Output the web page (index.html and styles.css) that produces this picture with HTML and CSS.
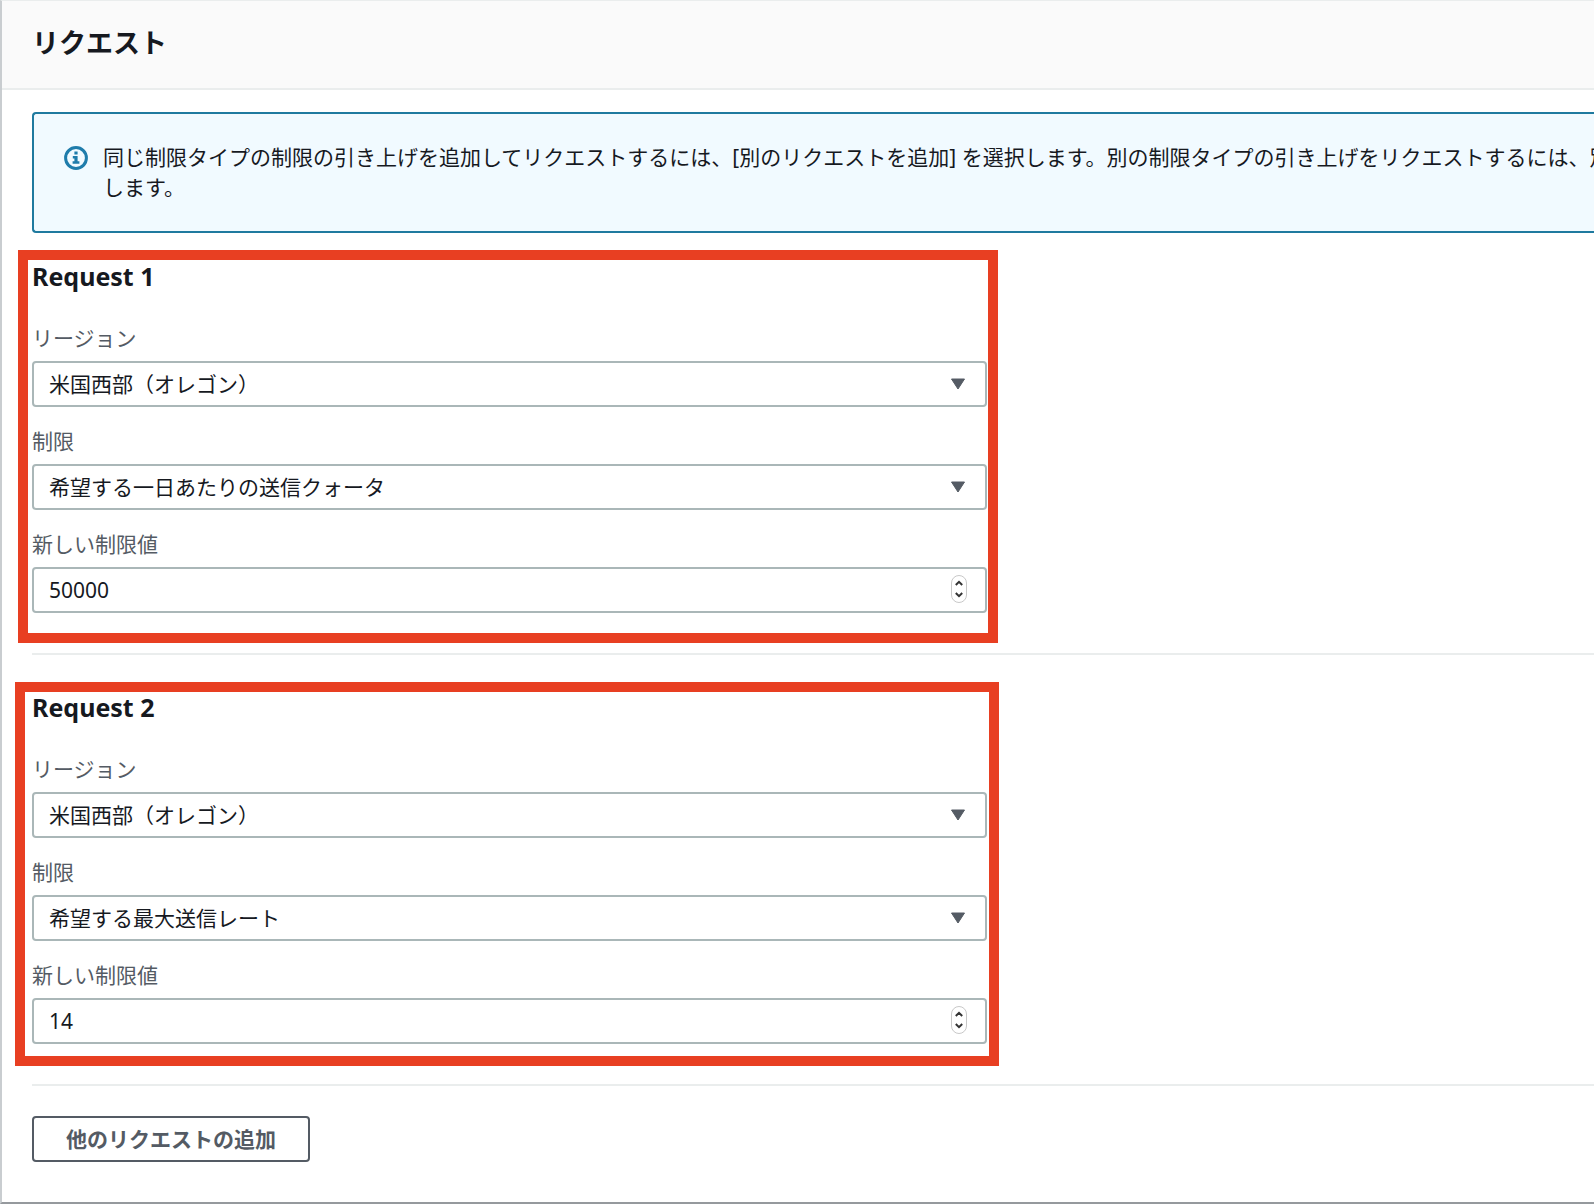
FILE: index.html
```
<!DOCTYPE html>
<html lang="ja">
  <head>
    <meta charset="UTF-8" />
    <title>リクエスト</title>
    <link rel="stylesheet" href="styles.css">
  </head>
  <body>
    <main class="panel">
      <header class="panel-header">
        <h1>リクエスト</h1>
      </header>
      <form class="panel-body">
        <div class="alert">
          <svg class="alert-icon" viewBox="0 0 24 24" aria-hidden="true">
            <circle cx="12" cy="12" r="10.4" />
            <path class="solid" d="M10.4 5.6h3.2v3h-3.2zM8.8 10h4.8v5.2h1.8v2.6H8.6v-2.6h1.8v-2.6H8.8z" />
          </svg>
          <p>
            同じ制限タイプの制限の引き上げを追加してリクエストするには、[別のリクエストを追加] を選択します。別の制限タイプの引き上げをリクエストするには、別<br />します。
          </p>
        </div>

        <section class="request">
          <div class="request-fields">
            <h2>Request 1</h2>
            <div class="field">
              <label for="region1">リージョン</label>
              <div class="control">
                <select id="region1" name="region1">
                  <option>米国西部（オレゴン）</option>
                </select>
                <svg class="arrow" viewBox="0 0 16 12" aria-hidden="true"><path d="M1.5 1h13L8 11z" /></svg>
              </div>
            </div>
            <div class="field">
              <label for="limit1">制限</label>
              <div class="control">
                <select id="limit1" name="limit1">
                  <option>希望する一日あたりの送信クォータ</option>
                </select>
                <svg class="arrow" viewBox="0 0 16 12" aria-hidden="true"><path d="M1.5 1h13L8 11z" /></svg>
              </div>
            </div>
            <div class="field">
              <label for="value1">新しい制限値</label>
              <div class="control">
                <input type="number" id="value1" name="value1" value="50000" />
                <svg class="stepper" viewBox="0 0 16 28" aria-hidden="true">
                  <rect x="0.5" y="0.5" width="15" height="27" rx="7.5" />
                  <path d="M4.8 10L8 6.8l3.2 3.2M4.8 18L8 21.2l3.2-3.2" />
                </svg>
              </div>
            </div>
            <div class="highlight highlight-first"></div>
          </div>
        </section>

        <section class="request">
          <div class="request-fields">
            <h2>Request 2</h2>
            <div class="field">
              <label for="region2">リージョン</label>
              <div class="control">
                <select id="region2" name="region2">
                  <option>米国西部（オレゴン）</option>
                </select>
                <svg class="arrow" viewBox="0 0 16 12" aria-hidden="true"><path d="M1.5 1h13L8 11z" /></svg>
              </div>
            </div>
            <div class="field">
              <label for="limit2">制限</label>
              <div class="control">
                <select id="limit2" name="limit2">
                  <option>希望する最大送信レート</option>
                </select>
                <svg class="arrow" viewBox="0 0 16 12" aria-hidden="true"><path d="M1.5 1h13L8 11z" /></svg>
              </div>
            </div>
            <div class="field">
              <label for="value2">新しい制限値</label>
              <div class="control">
                <input type="number" id="value2" name="value2" value="14" />
                <svg class="stepper" viewBox="0 0 16 28" aria-hidden="true">
                  <rect x="0.5" y="0.5" width="15" height="27" rx="7.5" />
                  <path d="M4.8 10L8 6.8l3.2 3.2M4.8 18L8 21.2l3.2-3.2" />
                </svg>
              </div>
            </div>
            <div class="highlight highlight-second"></div>
          </div>
        </section>

        <button type="button" class="add-button">他のリクエストの追加</button>
      </form>
    </main>
  </body>
</html>
```
FILE: styles.css
```
* {
  box-sizing: border-box;
}
body {
  margin: 0;
  background-color: #f2f3f3;
  color: #16191f;
  font-family: "Noto Sans", "Noto Sans CJK JP", sans-serif;
  font-size: 21px;
  line-height: 30px;
  overflow-x: hidden;
}
h1,
h2,
p {
  margin: 0;
}
.panel {
  background-color: #fff;
  border-left: 2px solid #c9cdd0;
  border-top: 1px solid #eaeded;
  border-bottom: 2px solid #95999d;
}
.panel-header {
  background-color: #fafafa;
  border-bottom: 2px solid #eaeded;
  padding: 24px 30px 27px;
}
h1 {
  font-size: 27px;
  line-height: 36px;
}
.panel-body {
  padding: 22px 0 40px 30px;
}

/* Message d'information */
.alert {
  display: flex;
  gap: 15px;
  padding: 28px 0 29px 30px;
  background-color: #f1faff;
  border: 2px solid #1f7a9f;
  border-right: none;
  border-radius: 4px 0 0 4px;
  overflow: hidden;
}
.alert p {
  white-space: nowrap;
}
.alert-icon {
  flex: none;
  width: 24px;
  height: 24px;
  margin-top: 4px;
  fill: none;
  stroke: #1f7cab;
  stroke-width: 3;
}
.alert-icon .solid {
  fill: #1f7cab;
  stroke: none;
}

.request {
  border-bottom: 2px solid #eaeded;
  padding: 36px 0 40px;
}
.alert + .request {
  padding-top: 27px;
}
.request-fields {
  position: relative;
  max-width: 955px;
}
h2 {
  font-size: 25px;
  line-height: 32px;
  margin-bottom: 31px;
}
.field + .field {
  margin-top: 19px;
}
label {
  display: block;
  color: #545b64;
  margin-bottom: 8px;
}
.control {
  position: relative;
}
select,
input {
  display: block;
  appearance: none;
  width: 100%;
  height: 46px;
  padding: 0 48px 0 15px;
  border: 2px solid #aab7b8;
  border-radius: 4px;
  background-color: #fff;
  color: #16191f;
  font: inherit;
}
input {
  appearance: textfield;
}
input::-webkit-inner-spin-button {
  display: none;
}
.arrow,
.stepper {
  position: absolute;
  pointer-events: none;
}
.arrow {
  top: 17px;
  right: 21px;
  width: 16px;
  height: 12px;
  fill: #545b64;
  stroke: #545b64;
  stroke-width: 1;
  stroke-linejoin: round;
}
.stepper {
  top: 8px;
  right: 20px;
  width: 16px;
  height: 28px;
  fill: #fff;
}
.stepper rect {
  stroke: #c8c8c8;
}
.stepper path {
  fill: none;
  stroke: #333;
  stroke-width: 2;
}

/* Cadres rouges */
.highlight {
  position: absolute;
  border: 10px solid #e83f22;
  pointer-events: none;
}
.highlight-first {
  inset: -10px -11px -30px -14px;
}
.highlight-second {
  inset: -9px -12px -22px -17px;
}

.add-button {
  display: block;
  margin-top: 30px;
  height: 46px;
  padding: 0 32px;
  background-color: #fff;
  border: 2px solid #545b64;
  border-radius: 4px;
  color: #545b64;
  font: inherit;
  font-weight: bold;
  cursor: pointer;
}
.add-button:hover {
  background-color: #fafafa;
}
```
